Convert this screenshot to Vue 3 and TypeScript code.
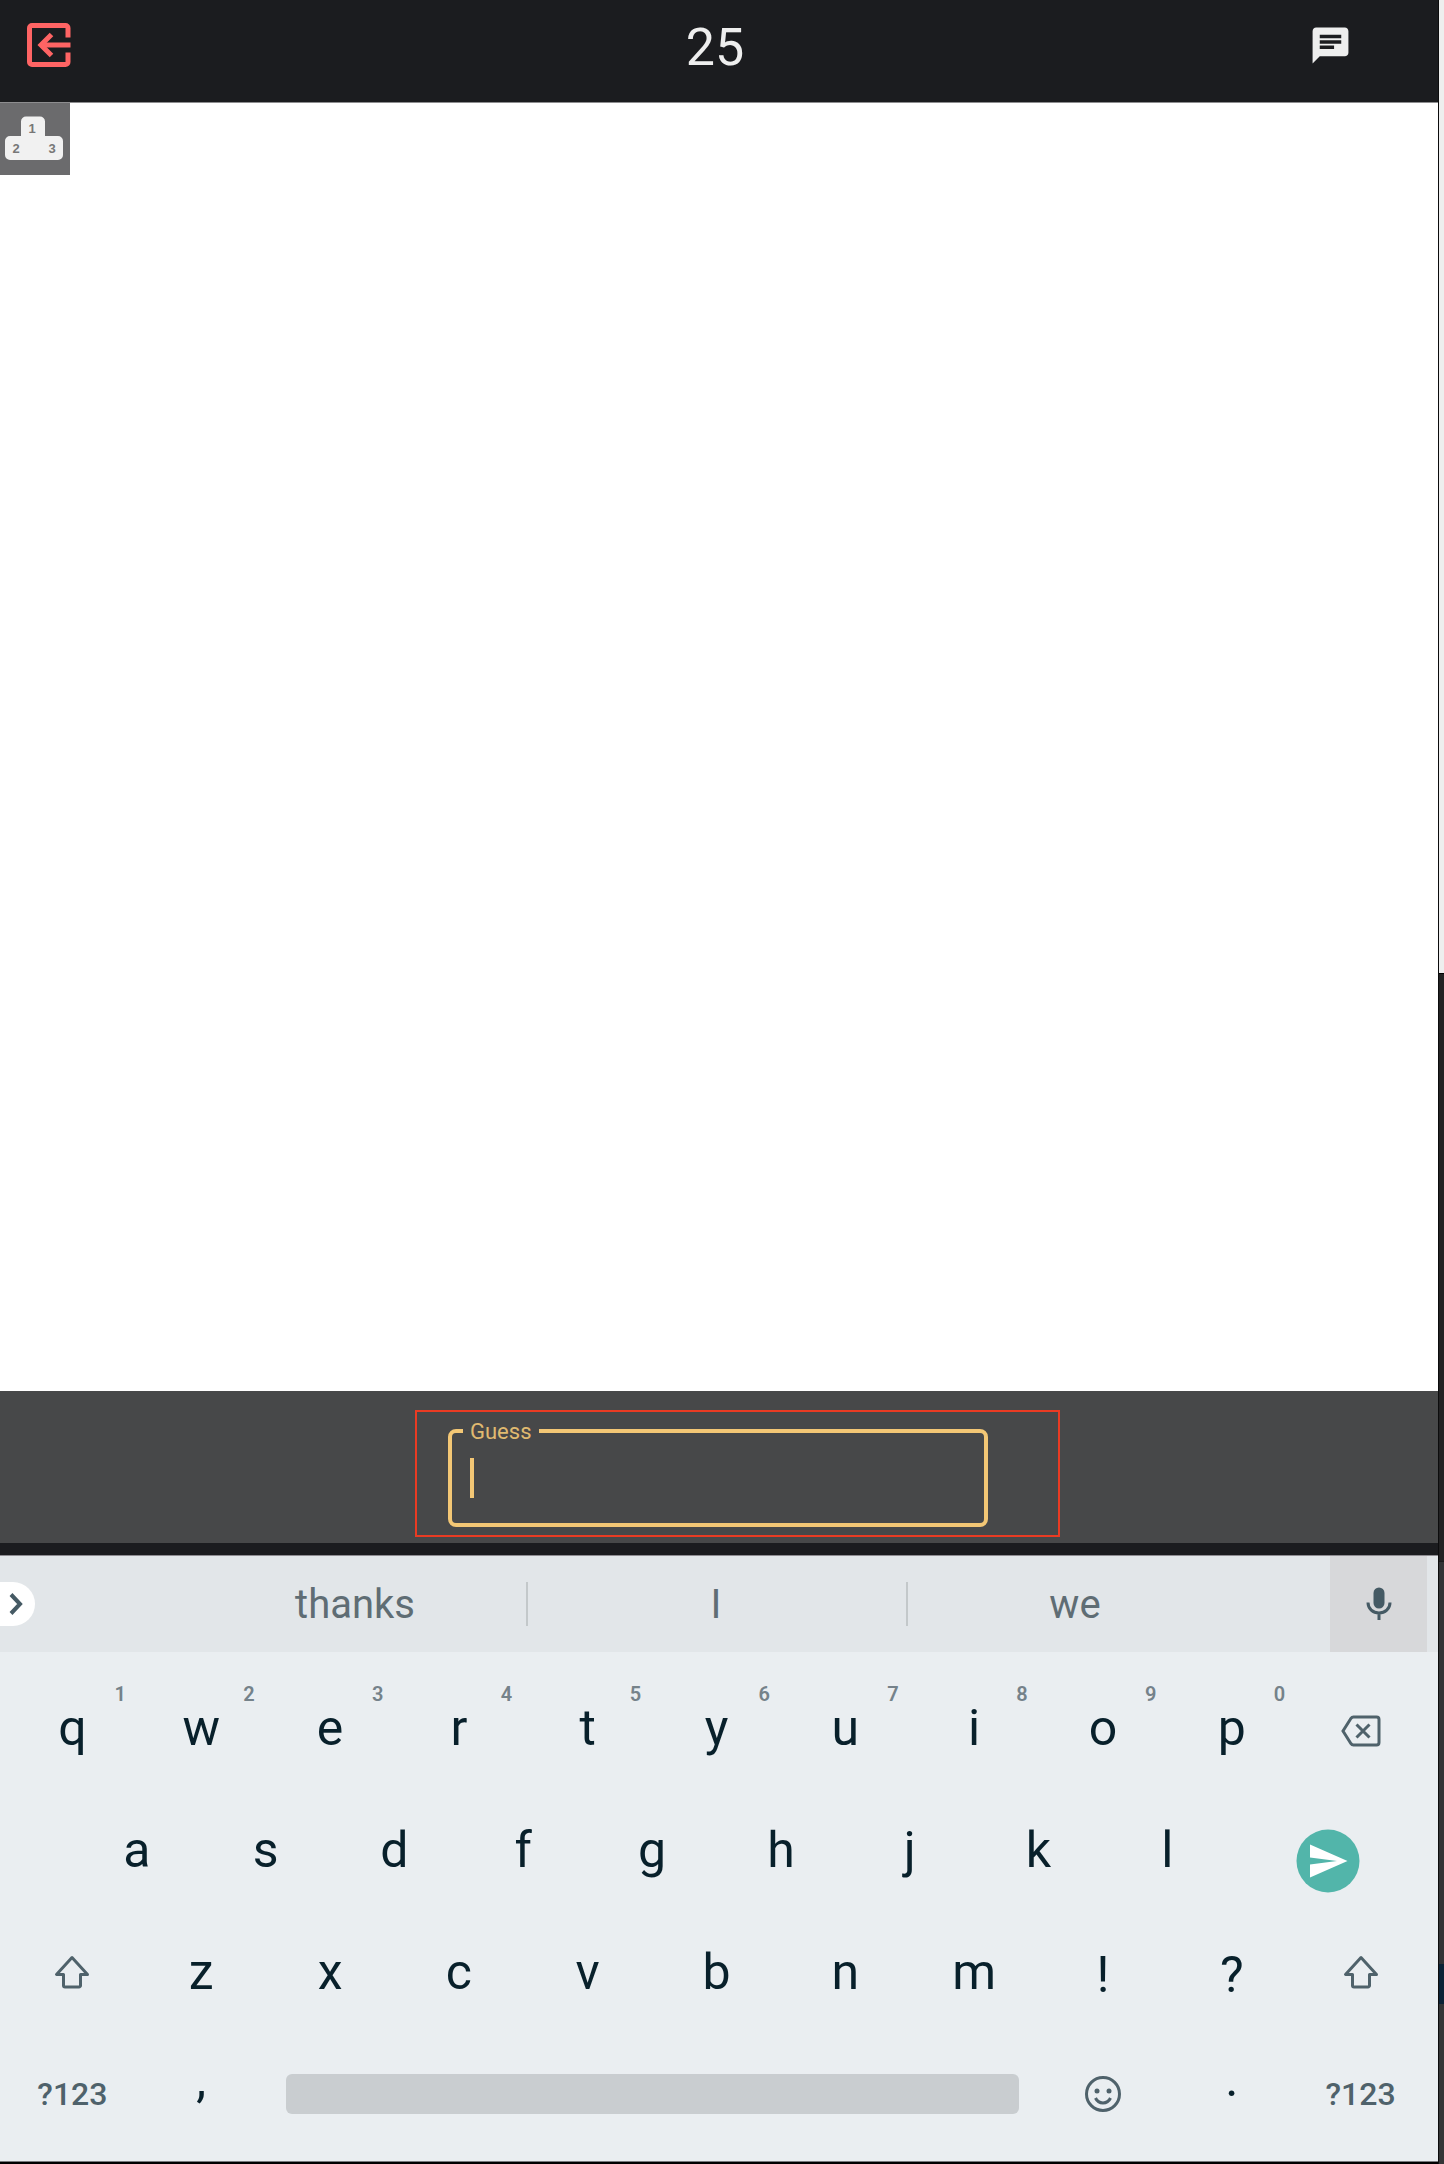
<script setup lang="ts">
import { ref } from 'vue'

interface LetterKey {
  label: string
  hint?: string
  symbol?: boolean
}

const guess = ref('')
const secondsLeft = 25
const suggestions: string[] = ['thanks', 'I', 'we']

const topRow: LetterKey[] = 'qwertyuiop'
  .split('')
  .map((label, i) => ({ label, hint: String((i + 1) % 10) }))
const homeRow: LetterKey[] = 'asdfghjkl'.split('').map((label) => ({ label }))
const bottomRow: LetterKey[] = 'zxcvbnm!?'
  .split('')
  .map((label) => ({ label, symbol: label === '!' || label === '?' }))

function type(text: string): void {
  guess.value += text
}

function erase(): void {
  guess.value = guess.value.slice(0, -1)
}
</script>

<template>
  <div class="screen">
    <main class="app">
      <header class="topbar">
        <button class="leave" type="button" aria-label="Leave game">
          <svg width="44" height="44" viewBox="0 0 44 44" fill="none" stroke="#ff6464">
            <path d="M41 14.500V5a2.500 2.500 0 0 0-2.500-2.500H5A2.500 2.500 0 0 0 2.500 5v34A2.500 2.500 0 0 0 5 41.500h33.500A2.500 2.500 0 0 0 41 39v-9.500" stroke-width="5" />
            <path d="M43.500 22H15" stroke-width="5" />
            <path d="M24.500 11.500L14 22l10.500 10.500" stroke-width="5" />
          </svg>
        </button>
        <h1 class="timer">{{ secondsLeft }}</h1>
        <button class="chat" type="button" aria-label="Chat">
          <svg width="43" height="43" viewBox="0 0 24 24" fill="#eeeeee">
            <path d="M20 2H4c-1.100 0-1.990.9-1.990 2L2 22l4-4h14c1.100 0 2-.9 2-2V4c0-1.100-.9-2-2-2zM6 9h12v2H6V9zm8 5H6v-2h8v2zm4-6H6V6h12v2z" />
          </svg>
        </button>
      </header>

      <section class="canvas" aria-label="Drawing">
        <button class="podium" type="button" aria-label="Ranking">
          <svg width="70" height="72" viewBox="0 0 70 72">
            <path
              fill="#f1f1f1"
              d="M26 13.500h14a5 5 0 0 1 5 5V33h13a5 5 0 0 1 5 5v14a5 5 0 0 1-5 5H10a5 5 0 0 1-5-5V38a5 5 0 0 1 5-5h11V18.500a5 5 0 0 1 5-5z"
            />
            <g class="places">
              <text x="32" y="30">1</text>
              <text x="16" y="50">2</text>
              <text x="52" y="50">3</text>
            </g>
          </svg>
        </button>
      </section>

      <section class="guess-bar">
        <div class="field">
          <label class="field-label" for="guess">Guess</label>
          <span class="caret"></span>
          <input id="guess" v-model="guess" class="field-input" type="text" autocomplete="off" />
        </div>
      </section>

      <section class="keyboard" aria-label="Keyboard">
        <div class="suggestions">
          <div class="expand-cell">
            <button class="expand" type="button" aria-label="More">
              <svg width="16" height="24" viewBox="0 0 16 24" fill="none" stroke="#455a64" stroke-width="4">
                <path d="M3 2.500L12 12l-9 9.500" />
              </svg>
            </button>
          </div>
          <button v-for="word in suggestions" :key="word" class="word" type="button" @click="type(word)">
            {{ word }}
          </button>
          <button class="mic" type="button" aria-label="Voice input">
            <svg width="26" height="34" viewBox="0 0 26 34" fill="none" stroke="#455a64">
              <rect x="7.500" y="0.500" width="11" height="21" rx="5.500" fill="#455a64" stroke="none" />
              <path d="M2 15.500c0 6.500 5 10.500 11 10.500s11-4 11-10.500M13 26v7" stroke-width="3" />
            </svg>
          </button>
        </div>

        <div class="keys">
          <div class="row">
            <button v-for="key in topRow" :key="key.label" class="key" type="button" @click="type(key.label)">
              {{ key.label }}<span class="hint">{{ key.hint }}</span>
            </button>
            <button class="key backspace" type="button" aria-label="Backspace" @click="erase">
              <svg width="40" height="32" viewBox="0 0 40 32" fill="none" stroke="#4f626b" stroke-width="3">
                <path d="M12.500 2H35.500a2.500 2.500 0 0 1 2.500 2.500v23a2.500 2.500 0 0 1-2.500 2.500H12.500a3 3 0 0 1-2.500-1.300L2 16l8-12.700A3 3 0 0 1 12.500 2z" />
                <path d="M15.500 9.500l13 13M28.500 9.500l-13 13" />
              </svg>
            </button>
          </div>

          <div class="row">
            <span></span>
            <button v-for="key in homeRow" :key="key.label" class="key" type="button" @click="type(key.label)">
              {{ key.label }}
            </button>
            <button class="key send" type="button" aria-label="Send">
              <svg width="64" height="64" viewBox="0 0 64 64">
                <circle cx="32" cy="32" r="31.500" fill="#52b5aa" />
                <path d="M14 15.500L51.500 32 14 48.500V35.500L41 32 14 28.500z" fill="#ffffff" />
              </svg>
            </button>
          </div>

          <div class="row">
            <button class="key" type="button" aria-label="Shift">
              <svg width="36" height="34" viewBox="0 0 36 34" fill="none" stroke="#4f626b" stroke-width="3" stroke-linejoin="round">
                <path d="M18 2.500L2.500 19.500H9.500V30.500a1.500 1.500 0 0 0 1.500 1.500H25a1.500 1.500 0 0 0 1.500-1.500V19.500H33.500z" />
              </svg>
            </button>
            <button
              v-for="key in bottomRow"
              :key="key.label"
              class="key"
              :class="{ symbol: key.symbol }"
              type="button"
              @click="type(key.label)"
            >
              {{ key.label }}
            </button>
            <button class="key" type="button" aria-label="Shift">
              <svg width="36" height="34" viewBox="0 0 36 34" fill="none" stroke="#4f626b" stroke-width="3" stroke-linejoin="round">
                <path d="M18 2.500L2.500 19.500H9.500V30.500a1.500 1.500 0 0 0 1.500 1.500H25a1.500 1.500 0 0 0 1.500-1.500V19.500H33.500z" />
              </svg>
            </button>
          </div>

          <div class="row">
            <button class="key mode" type="button">?123</button>
            <button class="key point" type="button" @click="type(',')">,</button>
            <button class="key space" type="button" aria-label="Space" @click="type(' ')">
              <span class="space-bar"></span>
            </button>
            <button class="key" type="button" aria-label="Emoji">
              <svg width="36" height="36" viewBox="0 0 36 36" fill="none" stroke="#4f626b" stroke-width="3">
                <circle cx="18" cy="18" r="16.500" />
                <circle cx="12" cy="15" r="2.500" fill="#4f626b" stroke="none" />
                <circle cx="24" cy="15" r="2.500" fill="#4f626b" stroke="none" />
                <path d="M10.500 22c3 6.500 12 6.500 15 0" />
              </svg>
            </button>
            <button class="key point" type="button" @click="type('.')">.</button>
            <button class="key mode" type="button">?123</button>
          </div>
        </div>
      </section>
    </main>

    <aside class="edge" aria-hidden="true">
      <div class="edge-light"></div>
      <div class="edge-dark"></div>
      <div class="edge-gray"></div>
      <div class="edge-blue"></div>
      <div class="edge-foot"></div>
    </aside>
  </div>
</template>

<style>
body {
  margin: 0;
  background: #000000;
}
</style>

<style scoped>
.screen {
  display: flex;
  min-height: 100vh;
  font-family: Roboto, "Liberation Sans", sans-serif;
}

button {
  margin: 0;
  padding: 0;
  border: 0;
  background: none;
  color: inherit;
  font: inherit;
  cursor: pointer;
}

svg {
  display: block;
}

.app {
  flex: 1;
  display: flex;
  flex-direction: column;
  min-width: 0;
  border-bottom: 2px solid #000000;
}

.topbar {
  box-sizing: border-box;
  display: grid;
  grid-template-columns: 1fr auto 1fr;
  align-items: center;
  height: 103px;
  padding: 0 35px 12px 27px;
  border-bottom: 1px solid #8d8d8f;
  background: #1b1c1f;
}

.leave {
  justify-self: start;
}

.timer {
  margin: 0;
  padding-top: 6px;
  color: #eeeeee;
  font-size: 52px;
  font-weight: 400;
  line-height: 60px;
}

.chat {
  justify-self: end;
  margin-right: 51px;
}

.canvas {
  flex: 1;
  background: #ffffff;
}

.podium {
  display: block;
  background: #6b6b6d;
}

.places {
  fill: #777777;
  font-family: "Liberation Sans", sans-serif;
  font-size: 13px;
  font-weight: 700;
  text-anchor: middle;
}

.guess-bar {
  display: flex;
  justify-content: center;
  padding: 38px 2px 16px 0;
  border-bottom: 12px solid #1b1c1f;
  background: #474849;
}

.field {
  position: relative;
  box-sizing: border-box;
  display: flex;
  align-items: center;
  width: 540px;
  height: 98px;
  padding: 0 18px;
  border: 4px solid #f3c775;
  border-radius: 8px;
}

/* highlight frame around the whole field */
.field::before {
  content: "";
  position: absolute;
  inset: -23px -76px -14px -37px;
  border: 2px solid #ea3b23;
  pointer-events: none;
}

.field-label {
  position: absolute;
  top: -14px;
  left: 11px;
  padding: 0 7px;
  background: #474849;
  color: #e0ba70;
  font-size: 22px;
  line-height: 26px;
}

.caret {
  width: 4px;
  height: 40px;
  background: #f3c775;
}

.field-input {
  flex: 1;
  min-width: 0;
  padding: 0;
  border: 0;
  outline: 0;
  background: none;
  color: #eeeeee;
  font: inherit;
  font-size: 32px;
}

.keyboard {
  border-top: 1px solid #8e8c91;
  border-bottom: 1px solid #777a7c;
  background: #eaeef1;
}

.suggestions {
  display: grid;
  grid-template-columns: 186fr 340fr 380fr 338fr 183fr;
  align-items: center;
  height: 96px;
  padding-right: 11px;
  background: #e2e6e9;
  color: #5f6d74;
}

.expand {
  display: flex;
  align-items: center;
  width: 35px;
  height: 44px;
  padding-left: 8px;
  border-radius: 0 22px 22px 0;
  background: #ffffff;
}

.word {
  height: 44px;
  padding: 2px 2px 0 0;
  font-size: 40px;
  line-height: 42px;
}

.word + .word {
  border-left: 2px solid #c3c8ca;
}

.mic {
  display: flex;
  justify-content: center;
  align-items: center;
  justify-self: end;
  width: 97px;
  height: 96px;
  background: #d7d8da;
}

.keys {
  padding: 15px 13px 6px 8px;
  color: #08202b;
  font-size: 50px;
}

.row {
  display: grid;
  grid-template-columns: repeat(22, minmax(0, 1fr));
  height: 122px;
}

.key {
  position: relative;
  display: flex;
  justify-content: center;
  align-items: center;
  grid-column: span 2;
}

.hint {
  position: absolute;
  top: 17px;
  left: calc(50% + 42px);
  color: #75828a;
  font-size: 20px;
  font-weight: 600;
  line-height: 20px;
}

.backspace {
  padding-top: 6px;
}

.send {
  grid-column: span 3;
  padding-top: 22px;
}

.symbol {
  padding-top: 6px;
}

.mode {
  color: #4f626b;
  font-size: 32px;
  font-weight: 500;
}

.point {
  padding-bottom: 30px;
}

.space {
  grid-column: span 12;
  padding: 0 20px;
}

.space-bar {
  width: 100%;
  height: 40px;
  border-radius: 6px;
  background: #c9cdd0;
}

.edge {
  display: flex;
  flex-direction: column;
  box-sizing: border-box;
  width: 6px;
  border-left: 1px solid #0c0c0d;
}

.edge-light {
  flex: 973;
  border-bottom: 1px solid #000000;
  background: #eeeeee;
}

.edge-dark {
  flex: 587;
  border-bottom: 1px solid #1b1b1c;
  background: #222223;
}

.edge-gray {
  flex: 402;
  background: #323335;
}

.edge-blue {
  flex: 40;
  background: #0b2236;
}

.edge-foot {
  flex: 160;
  background: #343536;
}
</style>
